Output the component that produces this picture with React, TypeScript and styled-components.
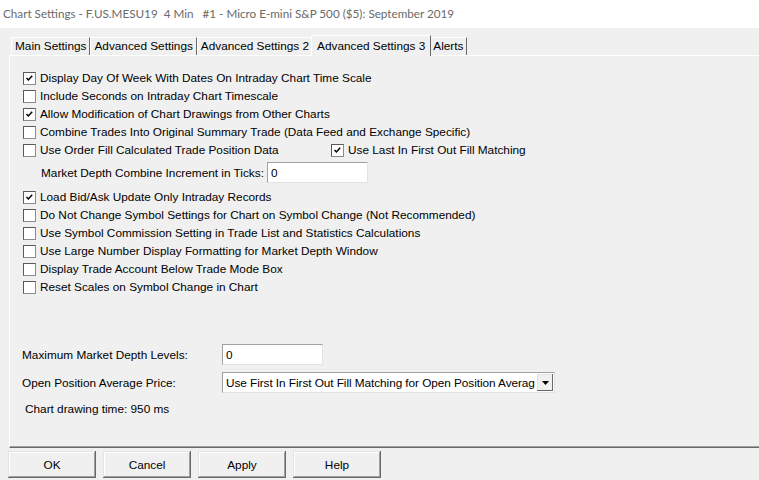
import React from "react";
import styled, { createGlobalStyle } from "styled-components";

const GlobalStyle = createGlobalStyle`
  html, body { margin: 0; padding: 0; background: #f0f0f0; }
  body { font-family: "Liberation Sans", Arial, sans-serif; }
  #root { width: 759px; height: 480px; }
`;

const Window = styled.div`
  width: 759px;
  height: 480px;
  overflow: hidden;
  background: #f0f0f0;
  display: flex;
  flex-direction: column;
  font-family: "Liberation Sans", Arial, sans-serif;
  font-size: 11.8px;
  color: #000;
`;

const TitleBar = styled.div`
  flex: none;
  height: 28px;
  box-sizing: border-box;
  padding: 0 0 2px 3px;
  background: #fff;
  display: flex;
  align-items: center;
  font-family: Lato, "Liberation Sans", sans-serif;
  font-size: 11.7px;
  color: #6a6a6a;
  white-space: pre;
`;

const TabStrip = styled.div`
  flex: none;
  height: 27px;
  display: flex;
  align-items: flex-end;
  padding-left: 11px;
  position: relative;
  z-index: 1;
`;

const Tab = styled.div<{ $active?: boolean }>`
  position: relative;
  z-index: ${(p) => (p.$active ? 2 : 1)};
  box-sizing: border-box;
  height: ${(p) => (p.$active ? 21 : 18)}px;
  margin: 0 ${(p) => (p.$active ? -2 : 0)}px ${(p) => (p.$active ? -1 : 0)}px;
  padding: 0 ${(p) => (p.$active ? 5 : 3)}px 1px;
  background: #f0f0f0;
  border-top: 1px solid #fff;
  border-left: 1px solid #fff;
  border-right: 1px solid #696969;
  display: flex;
  align-items: center;
  white-space: nowrap;
`;

const Panel = styled.div`
  flex: none;
  height: 393px;
  box-sizing: border-box;
  margin: 0 -10px 0 9px;
  padding: 13px 0 0 13px;
  border-top: 1px solid #fff;
  border-left: 1px solid #fff;
  border-bottom: 1px solid #696969;
  box-shadow: inset 0 -1px #a0a0a0;
  display: flex;
  flex-direction: column;
`;

const CheckRow = styled.div<{ $gap?: number }>`
  height: 18px;
  margin-top: ${(p) => p.$gap ?? 0}px;
  display: flex;
  align-items: center;
`;

const CheckItem = styled.label<{ $width?: number }>`
  display: flex;
  align-items: center;
  gap: 4px;
  width: ${(p) => (p.$width ? `${p.$width}px` : "auto")};
  white-space: nowrap;
`;

const Box = styled.span`
  width: 13px;
  height: 13px;
  box-sizing: border-box;
  background: #fff;
  border: 1px solid #8c8c8c;
  border-top-color: #5a5a5a;
  border-left-color: #5a5a5a;
  display: flex;
  align-items: center;
  justify-content: center;
  flex: none;
`;

const FieldRow = styled.div`
  height: 21px;
  margin-top: 3px;
  padding-left: 18px;
  display: flex;
  align-items: center;
  gap: 3px;
  white-space: nowrap;
`;

const TextBox = styled.input`
  width: 101px;
  height: 21px;
  box-sizing: border-box;
  margin: 0;
  padding: 0 0 0 3px;
  background: #fff;
  border: 1px solid #e3e3e3;
  border-top-color: #a0a0a0;
  border-left-color: #a0a0a0;
  font-family: "Liberation Sans", Arial, sans-serif;
  font-size: 11.8px;
  color: #000;
  outline: none;
`;

const Form = styled.div`
  margin: 48px 0 0 -1px;
  display: grid;
  grid-template-columns: 200px auto;
  row-gap: 7px;
  align-items: center;
`;

const FormLabel = styled.span`
  white-space: nowrap;
`;

const Select = styled.div`
  width: 333px;
  height: 21px;
  box-sizing: border-box;
  background: #fff;
  border: 1px solid #e3e3e3;
  border-top-color: #a0a0a0;
  border-left-color: #a0a0a0;
  display: flex;
  align-items: stretch;
  justify-self: start;
`;

const SelectText = styled.span`
  flex: 1;
  overflow: hidden;
  white-space: nowrap;
  padding-left: 3px;
  letter-spacing: -0.06px;
  display: flex;
  align-items: center;
`;

const ArrowButton = styled.span`
  flex: none;
  width: 16px;
  margin: 1px;
  box-sizing: border-box;
  background: #f0f0f0;
  box-shadow: inset -1px -1px #696969, inset 1px 1px #e3e3e3;
  display: flex;
  align-items: center;
  justify-content: center;
`;

const Note = styled.div`
  margin: 9px 0 0 2px;
  line-height: 14px;
`;

const ButtonBar = styled.div`
  flex: none;
  display: flex;
  gap: 7px;
  margin: 3px 0 0 8px;
`;

const Button = styled.button`
  width: 88px;
  height: 27px;
  margin: 0;
  padding: 0;
  border: none;
  background: #f0f0f0;
  box-shadow: inset -1px -1px #696969, inset 1px 1px #e3e3e3,
    inset -2px -2px #a0a0a0, inset 2px 2px #fff;
  font-family: "Liberation Sans", Arial, sans-serif;
  font-size: 11.8px;
  color: #000;
`;

const Check = () => (
  <svg width="11" height="11" viewBox="0 0 11 11">
    <polyline points="2.5,5 4.4,7 8.2,2.8" fill="none" stroke="#000" strokeWidth="1.5" />
  </svg>
);

const CheckBox = ({ checked, label, width }: { checked?: boolean; label: string; width?: number }) => (
  <CheckItem $width={width}>
    <Box>{checked && <Check />}</Box>
    <span>{label}</span>
  </CheckItem>
);

const tabs = ["Main Settings", "Advanced Settings", "Advanced Settings 2", "Advanced Settings 3", "Alerts"];

const upperOptions: { label: string; checked?: boolean }[] = [
  { label: "Display Day Of Week With Dates On Intraday Chart Time Scale", checked: true },
  { label: "Include Seconds on Intraday Chart Timescale" },
  { label: "Allow Modification of Chart Drawings from Other Charts", checked: true },
  { label: "Combine Trades Into Original Summary Trade (Data Feed and Exchange Specific)" },
];

const lowerOptions: { label: string; checked?: boolean }[] = [
  { label: "Load Bid/Ask Update Only Intraday Records", checked: true },
  { label: "Do Not Change Symbol Settings for Chart on Symbol Change (Not Recommended)" },
  { label: "Use Symbol Commission Setting in Trade List and Statistics Calculations" },
  { label: "Use Large Number Display Formatting for Market Depth Window" },
  { label: "Display Trade Account Below Trade Mode Box" },
  { label: "Reset Scales on Symbol Change in Chart" },
];

export default function App() {
  return (
    <>
      <GlobalStyle />
      <Window>
        <TitleBar>{"Chart Settings - F.US.MESU19  4 Min   #1 - Micro E-mini S&P 500 ($5): September 2019"}</TitleBar>
        <TabStrip>
          {tabs.map((t) => (
            <Tab key={t} $active={t === "Advanced Settings 3"}>
              {t}
            </Tab>
          ))}
        </TabStrip>
        <Panel>
          {upperOptions.map((o) => (
            <CheckRow key={o.label}>
              <CheckBox label={o.label} checked={o.checked} />
            </CheckRow>
          ))}
          <CheckRow>
            <CheckBox label="Use Order Fill Calculated Trade Position Data" width={308} />
            <CheckBox label="Use Last In First Out Fill Matching" checked />
          </CheckRow>
          <FieldRow>
            <span>Market Depth Combine Increment in Ticks:</span>
            <TextBox defaultValue="0" />
          </FieldRow>
          {lowerOptions.map((o, i) => (
            <CheckRow key={o.label} $gap={i === 0 ? 5 : 0}>
              <CheckBox label={o.label} checked={o.checked} />
            </CheckRow>
          ))}
          <Form>
            <FormLabel>Maximum Market Depth Levels:</FormLabel>
            <TextBox defaultValue="0" />
            <FormLabel>Open Position Average Price:</FormLabel>
            <Select>
              <SelectText>Use First In First Out Fill Matching for Open Position Averag</SelectText>
              <ArrowButton>
                <svg width="7" height="4" viewBox="0 0 7 4">
                  <polygon points="0,0 7,0 3.5,4" fill="#000" />
                </svg>
              </ArrowButton>
            </Select>
          </Form>
          <Note>Chart drawing time: 950 ms</Note>
        </Panel>
        <ButtonBar>
          <Button>OK</Button>
          <Button>Cancel</Button>
          <Button>Apply</Button>
          <Button>Help</Button>
        </ButtonBar>
      </Window>
    </>
  );
}
